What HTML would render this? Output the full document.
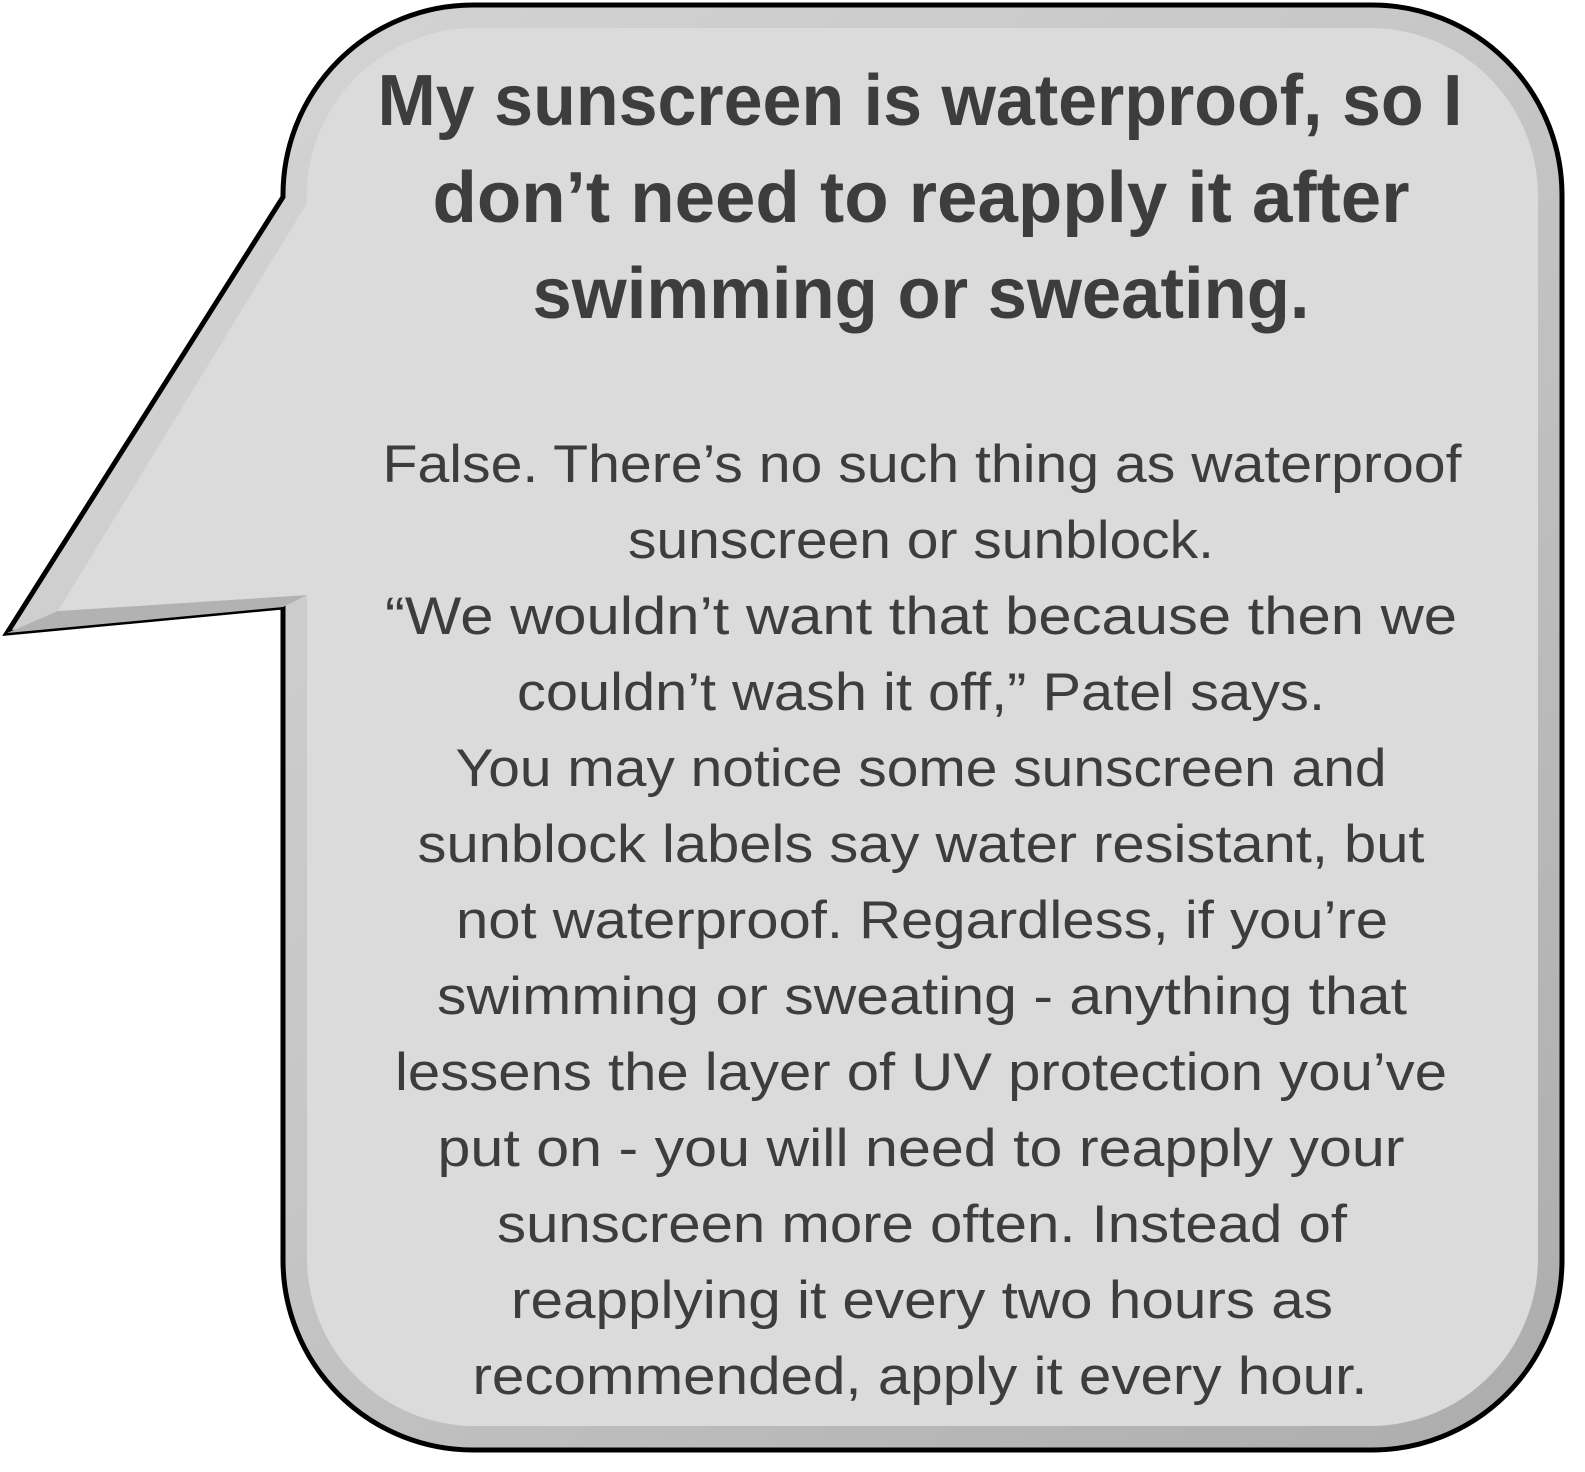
<!DOCTYPE html>
<html><head><meta charset="utf-8"><style>
html,body{margin:0;padding:0;background:#fff;}
svg{display:block;}
text{font-family:"Liberation Sans",sans-serif;fill:#3d3d3d;}
.t{font-weight:bold;font-size:72px;}
.b{font-size:53px;}
</style></head><body>
<svg width="1585" height="1472" viewBox="0 0 1585 1472">
<defs>
<linearGradient id="g" x1="0" y1="0" x2="1" y2="1">
<stop offset="0" stop-color="#d6d6d6"/>
<stop offset="0.5" stop-color="#c6c6c6"/>
<stop offset="1" stop-color="#acacac"/>
</linearGradient>
</defs>
<path d="M283,197 L283,195 A190,190 0 0 1 473,5 L1372,5 A190,190 0 0 1 1562,195 L1562,1260 A190,190 0 0 1 1372,1450 L473,1450 A190,190 0 0 1 283,1260 L283,607 L7,633 Z" fill="url(#g)" stroke="#000" stroke-width="5" stroke-linejoin="miter"/>
<path d="M283,607 L7,633 L58,611 L307,595 Z" fill="#b2b2b2"/>
<path d="M307,203 A168,168 0 0 1 475,28 L1370,28 A168,168 0 0 1 1538,196 L1538,1258 A168,168 0 0 1 1370,1426 L475,1426 A168,168 0 0 1 307,1258 L307,595 L58,611 L307,203 Z" fill="#dbdbdb"/>
<g text-anchor="middle">
<text class="t" x="920" y="125" textLength="1085" lengthAdjust="spacingAndGlyphs">My sunscreen is waterproof, so I</text>
<text class="t" x="921" y="222" textLength="977" lengthAdjust="spacingAndGlyphs">don’t need to reapply it after</text>
<text class="t" x="921" y="318" textLength="777" lengthAdjust="spacingAndGlyphs">swimming or sweating.</text>
<text class="b" x="922" y="482" textLength="1079" lengthAdjust="spacingAndGlyphs">False. There’s no such thing as waterproof</text>
<text class="b" x="921" y="558" textLength="586" lengthAdjust="spacingAndGlyphs">sunscreen or sunblock.</text>
<text class="b" x="921" y="634" textLength="1072" lengthAdjust="spacingAndGlyphs">“We wouldn’t want that because then we</text>
<text class="b" x="921" y="710" textLength="808" lengthAdjust="spacingAndGlyphs">couldn’t wash it off,” Patel says.</text>
<text class="b" x="921" y="786" textLength="931" lengthAdjust="spacingAndGlyphs">You may notice some sunscreen and</text>
<text class="b" x="921" y="862" textLength="1007" lengthAdjust="spacingAndGlyphs">sunblock labels say water resistant, but</text>
<text class="b" x="922" y="938" textLength="932" lengthAdjust="spacingAndGlyphs">not waterproof. Regardless, if you’re</text>
<text class="b" x="922" y="1014" textLength="970" lengthAdjust="spacingAndGlyphs">swimming or sweating - anything that</text>
<text class="b" x="921" y="1090" textLength="1052" lengthAdjust="spacingAndGlyphs">lessens the layer of UV protection you’ve</text>
<text class="b" x="921" y="1166" textLength="967" lengthAdjust="spacingAndGlyphs">put on - you will need to reapply your</text>
<text class="b" x="922" y="1242" textLength="850" lengthAdjust="spacingAndGlyphs">sunscreen more often. Instead of</text>
<text class="b" x="922" y="1318" textLength="822" lengthAdjust="spacingAndGlyphs">reapplying it every two hours as</text>
<text class="b" x="920" y="1394" textLength="895" lengthAdjust="spacingAndGlyphs">recommended, apply it every hour.</text>
</g>
</svg>
</body></html>
